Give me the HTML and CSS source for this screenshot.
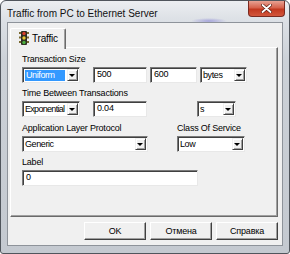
FILE: index.html
```html
<!doctype html>
<html lang="en">
<head>
  <meta charset="utf-8">
  <title>Traffic from PC to Ethernet Server</title>
  <link rel="stylesheet" href="styles.css">
</head>

<body>
  <div class="window">
    <div class="titlebar">
      <span class="title">Traffic from PC to Ethernet Server</span>
      <div class="close">
        <svg width="11" height="9" viewBox="0 0 11 9">
          <path d="M1.5 1 L9.5 8 M9.5 1 L1.5 8" stroke="#5a1a10" stroke-width="3.2" stroke-linecap="round"/>
          <path d="M1.5 1 L9.5 8 M9.5 1 L1.5 8" stroke="#fff" stroke-width="1.8" stroke-linecap="round"/>
        </svg>
      </div>
    </div>

    <div class="client">
      <!-- tab strip -->
      <div class="tabs">
        <div class="tab">
          <svg class="tab-icon" width="10" height="14" viewBox="0 0 10 14">
            <rect x="0" y="1" width="10" height="2" fill="#7a6a30"/>
            <rect x="0" y="5.5" width="10" height="2" fill="#7a6a30"/>
            <rect x="0" y="10" width="10" height="2" fill="#7a6a30"/>
            <rect x="2" y="0" width="6" height="14" rx="1" fill="#2e2e22"/>
            <circle cx="5" cy="2.5" r="1.7" fill="#d8402a"/>
            <circle cx="5" cy="7" r="1.7" fill="#e8c830"/>
            <circle cx="5" cy="11.5" r="1.7" fill="#4cb040"/>
          </svg>
          <span>Traffic</span>
        </div>
      </div>

      <div class="panel">
        <div class="field">
          <div class="label">Transaction Size</div>
          <div class="row">
            <div class="select w-58 gap-right">
              <span class="value"><span class="selected">Uniform</span></span>
              <span class="arrow"></span>
            </div>
            <div class="input w-54">500</div>
            <div class="input w-47">600</div>
            <div class="select w-47">
              <span class="value">bytes</span>
              <span class="arrow"></span>
            </div>
          </div>
        </div>

        <div class="field">
          <div class="label">Time Between Transactions</div>
          <div class="row">
            <div class="select w-58 gap-right">
              <span class="value tight">Exponential</span>
              <span class="arrow"></span>
            </div>
            <div class="input w-54">0.04</div>
            <div class="spacer w-47"></div>
            <div class="select w-39">
              <span class="value">s</span>
              <span class="arrow"></span>
            </div>
          </div>
        </div>

        <div class="field split">
          <div class="col">
            <div class="label">Application Layer Protocol</div>
            <div class="select w-126">
              <span class="value">Generic</span>
              <span class="arrow"></span>
            </div>
          </div>
          <div class="col">
            <div class="label">Class Of Service</div>
            <div class="select w-68">
              <span class="value">Low</span>
              <span class="arrow"></span>
            </div>
          </div>
        </div>

        <div class="field">
          <div class="label">Label</div>
          <div class="input w-176">0</div>
        </div>
      </div>

      <div class="buttons">
        <button>OK</button>
        <button>Отмена</button>
        <button>Справка</button>
      </div>
    </div>
  </div>
</body>
</html>
```

FILE: styles.css
```css
* {
  box-sizing: border-box;
}

body {
  margin: 0;
  background: #fff;
  font-family: 'Liberation Sans', Arial, sans-serif;
}

.window {
  width: 290px;
  height: 254px;
  border: 1px solid #50555c;
  border-radius: 6px 6px 3px 3px;
  padding: 0 6px 7px 6px;
  background:
    radial-gradient(ellipse 18px 3px at 208px 20px, rgba(120, 115, 210, 0.55), transparent),
    linear-gradient(#eceef1, #dde1e6 18px, #ccd1d7 60px, #c4c9d0);
  display: flex;
  flex-direction: column;
}

.titlebar {
  height: 21px;
  display: flex;
  justify-content: space-between;
  align-items: flex-start;
}

.title {
  font-size: 10px;
  color: #111;
  margin-top: 7px;
  line-height: 11px;
}

.close {
  width: 37px;
  height: 16px;
  margin-right: -2px;
  border: 1px solid #7a2a20;
  border-top: none;
  border-radius: 0 0 4px 4px;
  background: linear-gradient(#e8a293, #d6624c 45%, #c2381f 55%, #d2563c);
  display: flex;
  justify-content: center;
  align-items: center;
}

.client {
  flex: 1;
  background: #f0f0f0;
  border: 1px solid #8e939a;
  padding: 5px 4px 0 2px;
  display: flex;
  flex-direction: column;
  font-size: 9px;
  letter-spacing: -0.2px;
  color: #000;
}

.tabs {
  display: flex;
  height: 21px;
  margin-bottom: -2px;
  position: relative;
  z-index: 1;
}

.tab {
  width: 56px;
  height: 21px;
  background: #f0f0f0;
  border: 1px solid #fff;
  border-right-color: #6a6a6a;
  border-bottom: none;
  border-radius: 2px 2px 0 0;
  box-shadow: inset -1px 0 #a0a0a0;
  display: flex;
  align-items: center;
  gap: 3px;
  padding: 0 0 2px 8px;
  font-size: 10px;
}

.panel {
  height: 170px;
  border: 1px solid #fff;
  border-right-color: #6a6a6a;
  border-bottom-color: #6a6a6a;
  box-shadow: inset -1px -1px #a0a0a0;
  padding: 6px 0 0 11px;
  display: flex;
  flex-direction: column;
  gap: 5px;
}

.field {
  display: flex;
  flex-direction: column;
}

.label {
  line-height: 11px;
  margin-bottom: 2px;
  white-space: nowrap;
}

.row {
  display: flex;
}

.split {
  flex-direction: row;
  margin-top: 1px;
}

.split .col:first-child {
  width: 155px;
}

.select,
.input {
  height: 16px;
  background: #fff;
  border: 1px solid;
  border-color: #7a7a7a #e8e8e8 #e8e8e8 #7a7a7a;
  box-shadow: inset 1px 1px #404040;
  line-height: 13px;
  white-space: nowrap;
}

.input {
  padding-left: 3px;
  margin-right: 3px;
}

.select {
  display: flex;
  margin-right: 1px;
}

.select .value {
  flex: 1;
  min-width: 0;
  overflow: hidden;
  padding: 2px 0 1px 2px;
  line-height: 11px;
  letter-spacing: -0.4px;
}

.select .tight {
  letter-spacing: -0.7px;
}

.selected {
  display: block;
  background: #3399ff;
  color: #fff;
  padding-left: 1px;
  margin-right: 2px;
}

.arrow {
  flex: none;
  width: 11px;
  height: 12px;
  margin: 1px 1px 0 0;
  background: #f0f0f0;
  border: 1px solid;
  border-color: #f0f0f0 #404040 #404040 #f0f0f0;
  box-shadow: inset 1px 1px #fff, inset -1px -1px #a0a0a0;
  position: relative;
}

.arrow::after {
  content: "";
  position: absolute;
  left: 1px;
  top: 4px;
  border-left: 3px solid transparent;
  border-right: 3px solid transparent;
  border-top: 3px solid #000;
}

.gap-right { margin-right: 13px; }
.w-39 { width: 39px; }
.w-47 { width: 47px; }
.w-54 { width: 54px; }
.w-58 { width: 58px; }
.w-68 { width: 68px; }
.w-126 { width: 126px; }
.w-176 { width: 176px; }

.buttons {
  display: flex;
  justify-content: flex-end;
  gap: 4px;
  padding-top: 5px;
}

button {
  width: 62px;
  height: 18px;
  padding: 0;
  font-family: inherit;
  font-size: 9px;
  letter-spacing: -0.2px;
  color: #000;
  background: #f0f0f0;
  border: 1px solid;
  border-color: #fff #404040 #404040 #fff;
  box-shadow: inset -1px -1px #a0a0a0;
}
```
